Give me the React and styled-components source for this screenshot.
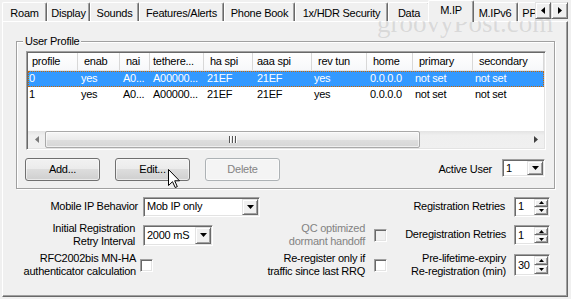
import React from "react";
import styled, { createGlobalStyle, css } from "styled-components";

const Global = createGlobalStyle`
  *, *::before, *::after { box-sizing: border-box; }
  html, body { margin: 0; padding: 0; background: #f0f0f0; overflow: hidden; }
`;

const sunken = css`
  border: 1px solid;
  border-color: #a0a0a0 #ffffff #ffffff #a0a0a0;
  box-shadow: inset 1px 1px 0 #696969, inset -1px -1px 0 #e3e3e3;
  padding: 1px;
`;

const raised = css`
  border: 1px solid;
  border-color: #e3e3e3 #696969 #696969 #e3e3e3;
  box-shadow: inset 1px 1px 0 #ffffff, inset -1px -1px 0 #a0a0a0;
  background: #f0f0f0;
`;

const Root = styled.div`
  position: relative;
  width: 571px;
  height: 299px;
  overflow: hidden;
  background: #f0f0f0;
  font-family: "Liberation Sans", Arial, sans-serif;
  font-size: 11px;
  letter-spacing: -0.25px;
  line-height: 13px;
  color: #000;
`;

const TabStrip = styled.div`
  display: flex;
  height: 21px;
  padding: 0 3px 0 2px;
`;

const TabList = styled.div`
  position: relative;
  z-index: 1;
  flex: none;
  display: flex;
  align-items: flex-start;
  width: 533px;
  height: 22px;
  margin-bottom: -1px;
  overflow: hidden;
`;

const Tab = styled.div`
  position: relative;
  z-index: ${(p) => (p.$active ? 2 : 0)};
  flex: none;
  width: ${(p) => p.$w}px;
  height: ${(p) => (p.$active ? 22 : 19)}px;
  margin: ${(p) => (p.$active ? "0 -2px" : "2px 0 0")};
  padding-top: ${(p) => (p.$active ? 3 : 4)}px;
  border-top: 1px solid #fff;
  border-left: 1px solid #fff;
  border-right: 1px solid #696969;
  border-radius: 2px 2px 0 0;
  box-shadow: inset -1px 0 0 #a0a0a0;
  background: #f0f0f0;
  text-align: center;
  white-space: nowrap;
`;

const TabArrows = styled.div`
  display: flex;
  margin-left: auto;
  margin-top: 2px;
`;

const ArrowBtn = styled.div`
  ${raised};
  width: ${(p) => p.$w}px;
  height: 17px;
  display: flex;
  align-items: center;
  justify-content: center;
`;

const Panel = styled.div`
  position: relative;
  height: 276px;
  margin: 0 3px 0 2px;
  padding: 13px 12px 0 13px;
  border-top: 1px solid #fff;
  border-left: 1px solid #fff;
  border-right: 1px solid #696969;
  border-bottom: 1px solid #696969;
  box-shadow: inset -1px -1px 0 #a0a0a0;
`;

const GroupBox = styled.fieldset`
  margin: 0;
  min-width: 0;
  padding: 3px 8px 7px 9px;
  border: 1px solid #a0a0a0;
  box-shadow: inset 1px 1px 0 #fff, 1px 1px 0 #fff;
`;

const Legend = styled.legend`
  position: relative;
  margin-left: -3px;
  padding: 0 2px;
  line-height: 13px;
  background: #f0f0f0;
`;

const ListView = styled.div`
  ${sunken};
  width: 520px;
  height: 99px;
  background: #fff;
  display: flex;
  flex-direction: column;
`;

const HeaderRow = styled.div`
  display: flex;
  height: 18px;
  flex: none;
  background: linear-gradient(#ffffff, #f7f8fa);
  border-bottom: 1px solid #e5e5e5;
`;

const HeaderCell = styled.div`
  flex: none;
  width: ${(p) => p.$w}px;
  padding-left: ${(p) => p.$pl}px;
  line-height: 17px;
  border-right: 1px solid #d8d8d8;
  white-space: nowrap;
  overflow: hidden;
`;

const Rows = styled.div`
  flex: 1;
`;

const Row = styled.div`
  display: flex;
  height: 16px;
  line-height: 15px;
  background: ${(p) => (p.$selected ? "#3399ff" : "transparent")};
  color: ${(p) => (p.$selected ? "#fff" : "#000")};
  outline: ${(p) => (p.$selected ? "1px dotted #cc6600" : "none")};
  outline-offset: -1px;
`;

const Cell = styled.div`
  flex: none;
  width: ${(p) => p.$w}px;
  padding-left: ${(p) => p.$pl}px;
  white-space: nowrap;
  overflow: hidden;
`;

const HScroll = styled.div`
  flex: none;
  display: flex;
  height: 17px;
  background: linear-gradient(#e3e3e3, #efefef 25%, #f0f0f0);
`;

const SBArrow = styled.div`
  flex: none;
  width: 17px;
  display: flex;
  align-items: center;
  justify-content: center;
`;

const SBThumb = styled.div`
  flex: none;
  width: ${(p) => p.$w}px;
  margin: 0 0 0 0;
  border: 1px solid #a9a9a9;
  border-radius: 2px;
  background: linear-gradient(#f6f6f6, #ebebeb 50%, #dedede 51%, #d6d6d6);
  box-shadow: inset 0 0 0 1px rgba(255, 255, 255, 0.6);
  display: flex;
  align-items: center;
  justify-content: center;
  gap: 2px;
`;

const Grip = styled.span`
  width: 1px;
  height: 7px;
  background: #555;
  box-shadow: 1px 0 0 #fff;
`;

const SBTrack = styled.div`
  flex: 1;
`;

const ButtonRow = styled.div`
  display: flex;
  align-items: center;
  height: 23px;
  margin: 8px 0 0 -1px;
  gap: 15px;
`;

const PushButton = styled.div`
  flex: none;
  width: 75px;
  height: 23px;
  border: 1px solid ${(p) => (p.$disabled ? "#adb2b5" : "#707070")};
  border-radius: 3px;
  background: ${(p) =>
    p.$disabled
      ? "#f4f4f4"
      : "linear-gradient(#f2f2f2 0%, #ebebeb 49%, #dddddd 50%, #cfcfcf 100%)"};
  box-shadow: inset 0 0 0 1px rgba(255, 255, 255, 0.55);
  color: ${(p) => (p.$disabled ? "#838383" : "#000")};
  display: flex;
  align-items: center;
  justify-content: center;
`;

const Spacer = styled.div`
  flex: 1;
`;

const InlineLabel = styled.div`
  margin-right: -5px;
  white-space: nowrap;
`;

const ComboBox = styled.div`
  ${sunken};
  flex: none;
  justify-self: start;
  align-self: ${(p) => p.$align || "center"};
  margin: ${(p) => p.$m || "0"};
  width: ${(p) => p.$w}px;
  height: ${(p) => p.$h}px;
  background: #fff;
  display: flex;
`;

const ComboText = styled.div`
  flex: 1;
  padding-left: 2px;
  display: flex;
  align-items: center;
  white-space: nowrap;
`;

const DropBtn = styled.div`
  ${raised};
  flex: none;
  width: 16px;
  display: flex;
  align-items: center;
  justify-content: center;
`;

const Form = styled.div`
  display: grid;
  grid-template-columns: 127px 117px 114px 13px 127px 36px;
  grid-template-rows: 23px 24px 26px;
  row-gap: 5px;
  margin-top: 6px;
  align-items: center;
`;

const FieldLabel = styled.div`
  text-align: right;
  padding-right: ${(p) => p.$pr}px;
  white-space: nowrap;
  line-height: 13.5px;
  color: ${(p) => (p.$disabled ? "#838383" : "#000")};
`;

const CheckBox = styled.div`
  ${sunken};
  justify-self: start;
  margin-left: ${(p) => p.$ml || 0}px;
  width: 13px;
  height: 13px;
  background: ${(p) => (p.$disabled ? "#f0f0f0" : "#fff")};
`;

const SpinBox = styled.div`
  ${sunken};
  width: 36px;
  height: ${(p) => p.$h}px;
  background: #fff;
  display: flex;
`;

const SpinValue = styled.div`
  flex: 1;
  padding-left: 2px;
  display: flex;
  align-items: center;
`;

const SpinBtns = styled.div`
  flex: none;
  width: 14px;
  display: flex;
  flex-direction: column;
`;

const SpinBtn = styled.div`
  ${raised};
  flex: 1;
  display: flex;
  align-items: center;
  justify-content: center;
`;

const Watermark = styled.div`
  position: absolute;
  left: 377px;
  top: 10px;
  font-family: "Liberation Serif", "Times New Roman", serif;
  font-size: 27px;
  line-height: 27px;
  letter-spacing: 0;
  color: rgba(120, 120, 120, 0.2);
  pointer-events: none;
  white-space: nowrap;
`;

const Cursor = styled.svg`
  position: absolute;
  left: 168px;
  top: 169px;
  overflow: visible;
`;

const Tri = ({ dir, w, h, color = "#000" }) => {
  const pts = {
    down: `0,0 ${w},0 ${w / 2},${h}`,
    up: `${w / 2},0 ${w},${h} 0,${h}`,
    left: `${w},0 ${w},${h} 0,${h / 2}`,
    right: `0,0 ${w},${h / 2} 0,${h}`,
  }[dir];
  return (
    <svg width={w} height={h} viewBox={`0 0 ${w} ${h}`}>
      <polygon points={pts} fill={color} />
    </svg>
  );
};

const Combo = ({ w, h, value, align, m }) => (
  <ComboBox $w={w} $h={h} $align={align} $m={m}>
    <ComboText>{value}</ComboText>
    <DropBtn>
      <Tri dir="down" w={7} h={4} />
    </DropBtn>
  </ComboBox>
);

const Spinner = ({ h, value }) => (
  <SpinBox $h={h}>
    <SpinValue>{value}</SpinValue>
    <SpinBtns>
      <SpinBtn>
        <Tri dir="up" w={5} h={3} />
      </SpinBtn>
      <SpinBtn>
        <Tri dir="down" w={5} h={3} />
      </SpinBtn>
    </SpinBtns>
  </SpinBox>
);

const tabs = [
  { label: "Roam", w: 45 },
  { label: "Display", w: 43 },
  { label: "Sounds", w: 49 },
  { label: "Features/Alerts", w: 85 },
  { label: "Phone Book", w: 71 },
  { label: "1x/HDR Security", w: 93 },
  { label: "Data", w: 42 },
  { label: "M.IP", w: 46, active: true },
  { label: "M.IPv6", w: 46 },
  { label: "PPP", w: 30 },
];

const columns = [
  { title: "profile", w: 50, hp: 4, cp: 1 },
  { title: "enab", w: 42, hp: 6, cp: 3 },
  { title: "nai", w: 30, hp: 6, cp: 3 },
  { title: "tethere...", w: 54, hp: 3, cp: 3 },
  { title: "ha spi", w: 49, hp: 6, cp: 3 },
  { title: "aaa spi", w: 59, hp: 4, cp: 4 },
  { title: "rev tun", w: 55, hp: 6, cp: 2 },
  { title: "home", w: 46, hp: 6, cp: 3 },
  { title: "primary", w: 60, hp: 6, cp: 2 },
  { title: "secondary", w: 71, hp: 6, cp: 2 },
];

const rows = [
  ["0", "yes", "A0...", "A00000...", "21EF", "21EF", "yes", "0.0.0.0", "not set", "not set"],
  ["1", "yes", "A0...", "A00000...", "21EF", "21EF", "yes", "0.0.0.0", "not set", "not set"],
];

export default function App() {
  return (
    <>
      <Global />
      <Root>
        <TabStrip>
          <TabList>
            {tabs.map((t) => (
              <Tab key={t.label} $w={t.w} $active={t.active}>
                {t.label}
              </Tab>
            ))}
          </TabList>
          <TabArrows>
            <ArrowBtn $w={16}>
              <Tri dir="left" w={4} h={7} />
            </ArrowBtn>
            <ArrowBtn $w={17}>
              <Tri dir="right" w={4} h={7} />
            </ArrowBtn>
          </TabArrows>
        </TabStrip>

        <Panel>
          <GroupBox>
            <Legend>User Profile</Legend>
            <ListView>
              <HeaderRow>
                {columns.map((c) => (
                  <HeaderCell key={c.title} $w={c.w} $pl={c.hp}>
                    {c.title}
                  </HeaderCell>
                ))}
              </HeaderRow>
              <Rows>
                {rows.map((r, i) => (
                  <Row key={i} $selected={i === 0}>
                    {r.map((v, j) => (
                      <Cell key={j} $w={columns[j].w} $pl={columns[j].cp}>
                        {v}
                      </Cell>
                    ))}
                  </Row>
                ))}
              </Rows>
              <HScroll>
                <SBArrow>
                  <Tri dir="left" w={4} h={7} color="#7a7a7a" />
                </SBArrow>
                <SBThumb $w={375}>
                  <Grip />
                  <Grip />
                  <Grip />
                </SBThumb>
                <SBTrack />
                <SBArrow>
                  <Tri dir="right" w={4} h={7} color="#404040" />
                </SBArrow>
              </HScroll>
            </ListView>
            <ButtonRow>
              <PushButton>Add...</PushButton>
              <PushButton>Edit...</PushButton>
              <PushButton $disabled>Delete</PushButton>
              <Spacer />
              <InlineLabel>Active User</InlineLabel>
              <Combo w={43} h={18} value="1" align="flex-start" m="1px 1px 0 0" />
            </ButtonRow>
          </GroupBox>

          <Form>
            <FieldLabel $pr={5}>Mobile IP Behavior</FieldLabel>
            <Combo w={117} h={20} value="Mob IP only" />
            <span />
            <span />
            <FieldLabel $pr={9}>Registration Retries</FieldLabel>
            <Spinner h={20} value="1" />

            <FieldLabel $pr={8}>
              Initial Registration
              <br />
              Retry Interval
            </FieldLabel>
            <Combo w={70} h={21} value="2000 mS" />
            <FieldLabel $pr={9} $disabled>
              QC optimized
              <br />
              dormant handoff
            </FieldLabel>
            <CheckBox $disabled />
            <FieldLabel $pr={8}>Deregistration Retries</FieldLabel>
            <Spinner h={20} value="1" />

            <FieldLabel $pr={7}>
              RFC2002bis MN-HA
              <br />
              authenticator calculation
            </FieldLabel>
            <CheckBox $ml={-3} />
            <FieldLabel $pr={9}>
              Re-register only if
              <br />
              traffic since last RRQ
            </FieldLabel>
            <CheckBox />
            <FieldLabel $pr={8}>
              Pre-lifetime-expiry
              <br />
              Re-registration (min)
            </FieldLabel>
            <Spinner h={22} value="30" />
          </Form>
        </Panel>

        <Watermark>groovyPost.com</Watermark>
        <Cursor width="12" height="19" viewBox="0 0 12 19">
          <path
            d="M0.5 0.5 L0.5 16.5 L4.5 12.7 L7.2 18.5 L9.3 17.6 L6.7 11.8 L11.5 11.8 Z"
            fill="#fff"
            stroke="#000"
            strokeWidth="1"
            strokeLinejoin="miter"
          />
        </Cursor>
      </Root>
    </>
  );
}
